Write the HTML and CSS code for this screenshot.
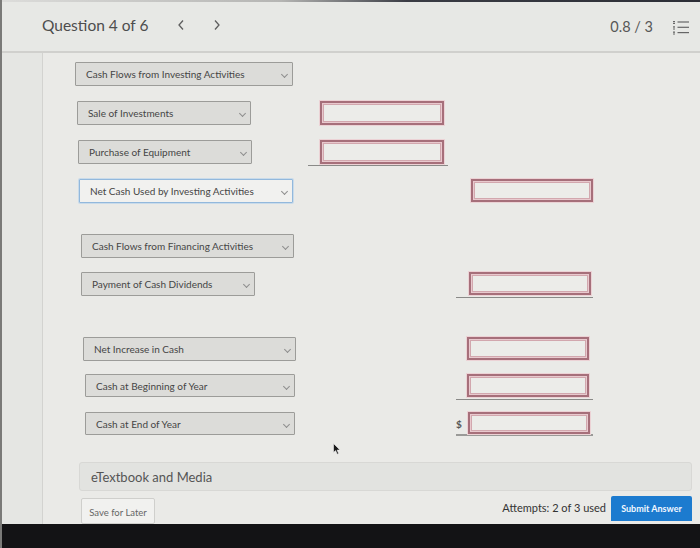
FILE: index.html
```html
<!DOCTYPE html>
<html lang="en">
<head>
<meta charset="utf-8">
<title>Question 4 of 6</title>
<link rel="stylesheet" href="styles.css">
</head>
<body>
<div class="screen">
  <header class="topbar">
    <div class="q-nav">
      <span class="q-title">Question 4 of 6</span>
      <svg class="chev" width="8" height="12" viewBox="0 0 8 12"><path d="M6 1.5 L2 6 L6 10.5" fill="none" stroke="#5e5e5e" stroke-width="1.3"/></svg>
      <svg class="chev chev-next" width="8" height="12" viewBox="0 0 8 12"><path d="M2 1.5 L6 6 L2 10.5" fill="none" stroke="#5e5e5e" stroke-width="1.3"/></svg>
    </div>
    <div class="score">
      <span class="score-val">0.8 / 3</span>
      <svg class="list-ico" width="16" height="16" viewBox="0 0 16 16">
        <g fill="#666"><rect x="0" y="2" width="2" height="1.3"/><rect x="0" y="4" width="2" height="1"/><rect x="0" y="7.3" width="2" height="1.3"/><rect x="0" y="9.5" width="2" height="1"/><rect x="0" y="12.5" width="2" height="1.3"/><rect x="0" y="14.5" width="2" height="1"/></g>
        <g stroke="#666" stroke-width="1.2"><line x1="4.5" y1="3" x2="16" y2="3"/><line x1="4.5" y1="8.3" x2="16" y2="8.3"/><line x1="4.5" y1="13.6" x2="16" y2="13.6"/></g>
      </svg>
    </div>
  </header>

  <div class="body">
    <aside class="rail"></aside>
    <main class="content">
      <div class="rows">
        <div class="row">
          <div class="c1"><div class="sel wide o0">Cash Flows from Investing Activities<i class="caret"></i></div></div>
        </div>
        <div class="row">
          <div class="c1"><div class="sel narrow o2">Sale of Investments<i class="caret"></i></div></div>
          <div class="c2"><span class="box"></span></div>
        </div>
        <div class="row">
          <div class="c1"><div class="sel narrow o3">Purchase of Equipment<i class="caret"></i></div></div>
          <div class="c2 ruled"><span class="box"></span></div>
        </div>
        <div class="row">
          <div class="c1"><div class="sel wide o4 focus">Net Cash Used by Investing Activities<i class="caret"></i></div></div>
          <div class="c2"></div>
          <div class="c3 p15"><span class="box"></span></div>
        </div>
        <div class="row gap-md">
          <div class="c1"><div class="sel wide o6">Cash Flows from Financing Activities<i class="caret"></i></div></div>
        </div>
        <div class="row gap-sm">
          <div class="c1"><div class="sel narrow o6">Payment of Cash Dividends<i class="caret"></i></div></div>
          <div class="c2"></div>
          <div class="c3 ruled p13"><span class="box"></span></div>
        </div>
        <div class="row gap-lg">
          <div class="c1"><div class="sel wide o8">Net Increase in Cash<i class="caret"></i></div></div>
          <div class="c2"></div>
          <div class="c3 p11"><span class="box"></span></div>
        </div>
        <div class="row gap-xs">
          <div class="c1"><div class="sel wide o10">Cash at Beginning of Year<i class="caret"></i></div></div>
          <div class="c2"></div>
          <div class="c3 ruled p11"><span class="box"></span></div>
        </div>
        <div class="row gap-sm">
          <div class="c1"><div class="sel wide o10">Cash at End of Year<i class="caret"></i></div></div>
          <div class="c2"></div>
          <div class="c3 ruled thick"><span class="dollar">$</span><span class="box"></span></div>
        </div>
      </div>

      <div class="media">eTextbook and Media</div>

      <div class="actions">
        <button class="save">Save for Later</button>
        <div class="submit-group">
          <span class="attempts">Attempts: 2 of 3 used</span>
          <button class="submit">Submit Answer</button>
        </div>
      </div>
    </main>
    <svg class="cursor" width="8" height="12" viewBox="0 0 8 12"><path d="M0.5 0.5 L0.5 9.5 L2.6 7.6 L4.2 11.2 L5.6 10.6 L4.1 7.1 L7 7 Z" fill="#1a1a1a" stroke="#eee" stroke-width="0.6"/></svg>
  </div>

  <div class="bezel"></div>
</div>
</body>
</html>
```

FILE: styles.css
```css
* { box-sizing: border-box; }

html, body {
  margin: 0;
  padding: 0;
  background: #eaeae7;
}

.screen {
  width: 700px;
  height: 548px;
  overflow: hidden;
  display: flex;
  flex-direction: column;
  font-family: Lato, "Open Sans", "Liberation Sans", sans-serif;
  color: #4a4a4a;
  border-left: 2px solid #7a7a78;
  background: #eaeae7;
}

/* ---------- header ---------- */
.topbar {
  height: 53px;
  flex: none;
  display: flex;
  align-items: center;
  justify-content: space-between;
  padding: 0 11px 0 40px;
  background: #e7e8e5;
  position: relative;
  border-bottom: 2px solid #d0d0cd;
}
.topbar::before {
  content: "";
  position: absolute;
  left: 0; right: 0; top: 0;
  height: 2px;
  background: linear-gradient(90deg, #dcdcda 0%, #b5b5b3 40%, #3a3c44 58%, #2c2e36 100%);
}

.q-nav {
  display: flex;
  align-items: center;
  margin-top: -2px;
}
.q-title {
  font-size: 15.5px;
  color: #4d4d4d;
}
.chev { margin-left: 29px; }
.chev-next { margin-left: 28px; }

.score {
  display: flex;
  align-items: center;
  margin-top: 2px;
}
.score-val {
  font-size: 14.5px;
  color: #575757;
}
.list-ico { margin-left: 20px; }

/* ---------- body ---------- */
.body {
  flex: 1;
  display: flex;
  position: relative;
}
.rail {
  width: 41px;
  flex: none;
  background: #e5e6e3;
  border-right: 1px solid #d3d3d0;
}
.content {
  flex: 1;
  padding-top: 9px;
  display: flex;
  flex-direction: column;
}

.rows {
  display: flex;
  flex-direction: column;
  gap: 15px;
}
.row {
  display: grid;
  grid-template-columns: 265px 148px 146px;
  height: 24px;
}
.row.gap-xs { margin-top: -2px; }
.row.gap-sm { margin-top: -1px; }
.row.gap-md { margin-top: 16px; }
.row.gap-lg { margin-top: 26px; }

.c1 { display: flex; }

.sel {
  position: relative;
  height: 24px;
  display: flex;
  align-items: center;
  padding-left: 10px;
  font-size: 10px;
  color: #454545;
  background: #dcdcd9;
  border: 1px solid #9c9c99;
  border-radius: 1px;
  white-space: nowrap;
}
.sel.wide { width: 213px; }
.sel.narrow { width: 174px; }
.sel.o0 { margin-left: 32px; width: 218px; }
.sel.o2 { margin-left: 34px; }
.sel.o3 { margin-left: 35px; }
.sel.o4 { margin-left: 36px; width: 214px; }
.sel.o6 { margin-left: 38px; }
.sel.o8 { margin-left: 40px; }
.sel.o10 { margin-left: 42px; width: 210px; height: 23px; }
.sel.focus {
  background: #f1f1ef;
  border-color: #92b8dc;
  box-shadow: 0 0 0 1px #c9dbea;
}

.caret {
  position: absolute;
  right: 5px;
  top: 9px;
  width: 5px;
  height: 5px;
  border-right: 1px solid #8e8e8e;
  border-bottom: 1px solid #8e8e8e;
  transform: rotate(45deg);
}

/* answer boxes */
.c2, .c3 {
  display: flex;
  align-items: flex-start;
}
.c2 { padding-left: 12px; width: 140px; }
.c3 { padding-left: 12px; width: 137px; }
.c3.p15 { padding-left: 15px; }
.c3.p13 { padding-left: 13px; }
.c3.p11 { padding-left: 11px; }

.ruled {
  height: 26px;
  border-bottom: 1px solid #8a8a88;
}
.ruled.thick {
  border-bottom: 2px solid #9a9a98;
  height: 24px;
}

.box {
  display: block;
  width: 124px;
  height: 24px;
  border: 2px solid #a66f7a;
  background: #ecece9;
  box-shadow: inset 0 0 0 1px #e9c9ce, inset 0 0 0 2px #d2a7ae, 0 0 0 1px #ecd2d5;
}
.c3 .box { width: 122px; height: 23px; }
.thick .box { height: 22px; }

.dollar {
  font-size: 10px;
  color: #555;
  width: 10px;
  margin-left: -12px;
  margin-right: 2px;
  padding-top: 6px;
  font-weight: 700;
}

/* media + actions */
.media {
  margin: 26px 8px 0 36px;
  height: 29px;
  display: flex;
  align-items: center;
  padding-left: 11px;
  font-size: 13px;
  color: #555;
  background: #e2e3e0;
  border: 1px solid #d8d8d5;
  border-radius: 3px;
}

.actions {
  margin: 5px 8px 0 38px;
  display: flex;
  justify-content: space-between;
  align-items: flex-start;
}
.save {
  font-family: inherit;
  font-size: 9.5px;
  color: #666;
  width: 74px;
  height: 26px;
  padding: 3px 0 0 0;
  background: #f1f1ef;
  border: 1px solid #cfcfcc;
  border-radius: 2px;
  margin-top: 2px;
}
.submit-group {
  display: flex;
  align-items: center;
}
.attempts {
  font-size: 11px;
  color: #333;
  margin-right: 5px;
  margin-top: -3px;
}
.submit {
  font-family: inherit;
  font-size: 9px;
  font-weight: 700;
  color: #f2f8ff;
  width: 81px;
  height: 25px;
  padding: 0;
  background: #1c7bcf;
  border: none;
  border-radius: 2px 2px 0 0;
}

.cursor {
  position: absolute;
  left: 331px;
  top: 390px;
}

.bezel {
  height: 28px;
  flex: none;
  background: #131315;
  border-bottom: 2px solid #5b5b5d;
}
```
